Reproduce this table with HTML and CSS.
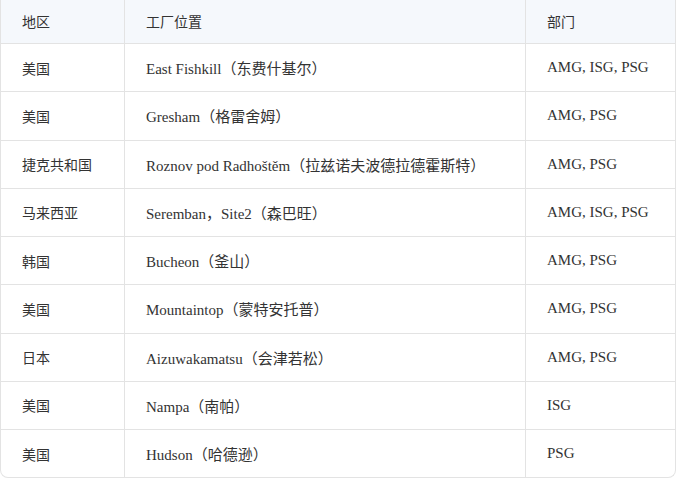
FILE: index.html
```html
<!DOCTYPE html>
<html lang="zh">
<head>
<meta charset="utf-8">
<link rel="stylesheet" href="styles.css">
</head>
<body>
<div class="wrap">
<table class="tbl">
<thead>
<tr><th class="c1">地区</th><th class="c2">工厂位置</th><th class="c3">部门</th></tr>
</thead>
<tbody>
<tr><td>美国</td><td class="lat">East Fishkill（东费什基尔）</td><td class="lat">AMG, ISG, PSG</td></tr>
<tr><td>美国</td><td class="lat">Gresham（格雷舍姆）</td><td class="lat">AMG, PSG</td></tr>
<tr><td>捷克共和国</td><td class="lat">Roznov pod Radhoštěm（拉兹诺夫波德拉德霍斯特）</td><td class="lat">AMG, PSG</td></tr>
<tr><td>马来西亚</td><td class="lat">Seremban，Site2（森巴旺）</td><td class="lat">AMG, ISG, PSG</td></tr>
<tr><td>韩国</td><td class="lat">Bucheon（釜山）</td><td class="lat">AMG, PSG</td></tr>
<tr><td>美国</td><td class="lat">Mountaintop（蒙特安托普）</td><td class="lat">AMG, PSG</td></tr>
<tr><td>日本</td><td class="lat">Aizuwakamatsu（会津若松）</td><td class="lat">AMG, PSG</td></tr>
<tr><td>美国</td><td class="lat">Nampa（南帕）</td><td class="lat">ISG</td></tr>
<tr><td>美国</td><td class="lat">Hudson（哈德逊）</td><td class="lat">PSG</td></tr>
</tbody>
</table>
</div>
</body>
</html>
```
FILE: styles.css
```css
html, body {
  margin: 0;
  padding: 0;
  background: #ffffff;
}
.wrap {
  width: 676px;
  box-sizing: border-box;
  border: 1px solid #e3e3e3;
  border-top: none;
  border-radius: 0 0 8px 8px;
  overflow: hidden;
}
.tbl {
  width: 100%;
  border-collapse: separate;
  border-spacing: 0;
  table-layout: fixed;
  font-family: "Noto Sans CJK SC", "Liberation Sans", sans-serif;
  font-size: 14px;
  color: #333333;
}
.c1 { width: 124px; }
.c2 { width: 401px; }
.tbl th {
  background: #f5f8fc;
  font-weight: normal;
  text-align: left;
  height: 44px;
  padding: 0 0 2px 21px;
  border-bottom: 1px solid #e3e3e3;
  border-right: 1px solid #e3e3e3;
  box-sizing: border-box;
}
.tbl td {
  height: 47.25px;
  padding: 0 0 0 21px;
  border-bottom: 1px solid #e3e3e3;
  border-right: 1px solid #e3e3e3;
  white-space: nowrap;
}
.tbl th:last-child, .tbl td:last-child { border-right: none; }
.tbl tbody tr:last-child td { border-bottom: none; }
.lat {
  font-family: "Liberation Serif", "Noto Sans CJK SC", serif;
  font-size: 15px;
}
```
